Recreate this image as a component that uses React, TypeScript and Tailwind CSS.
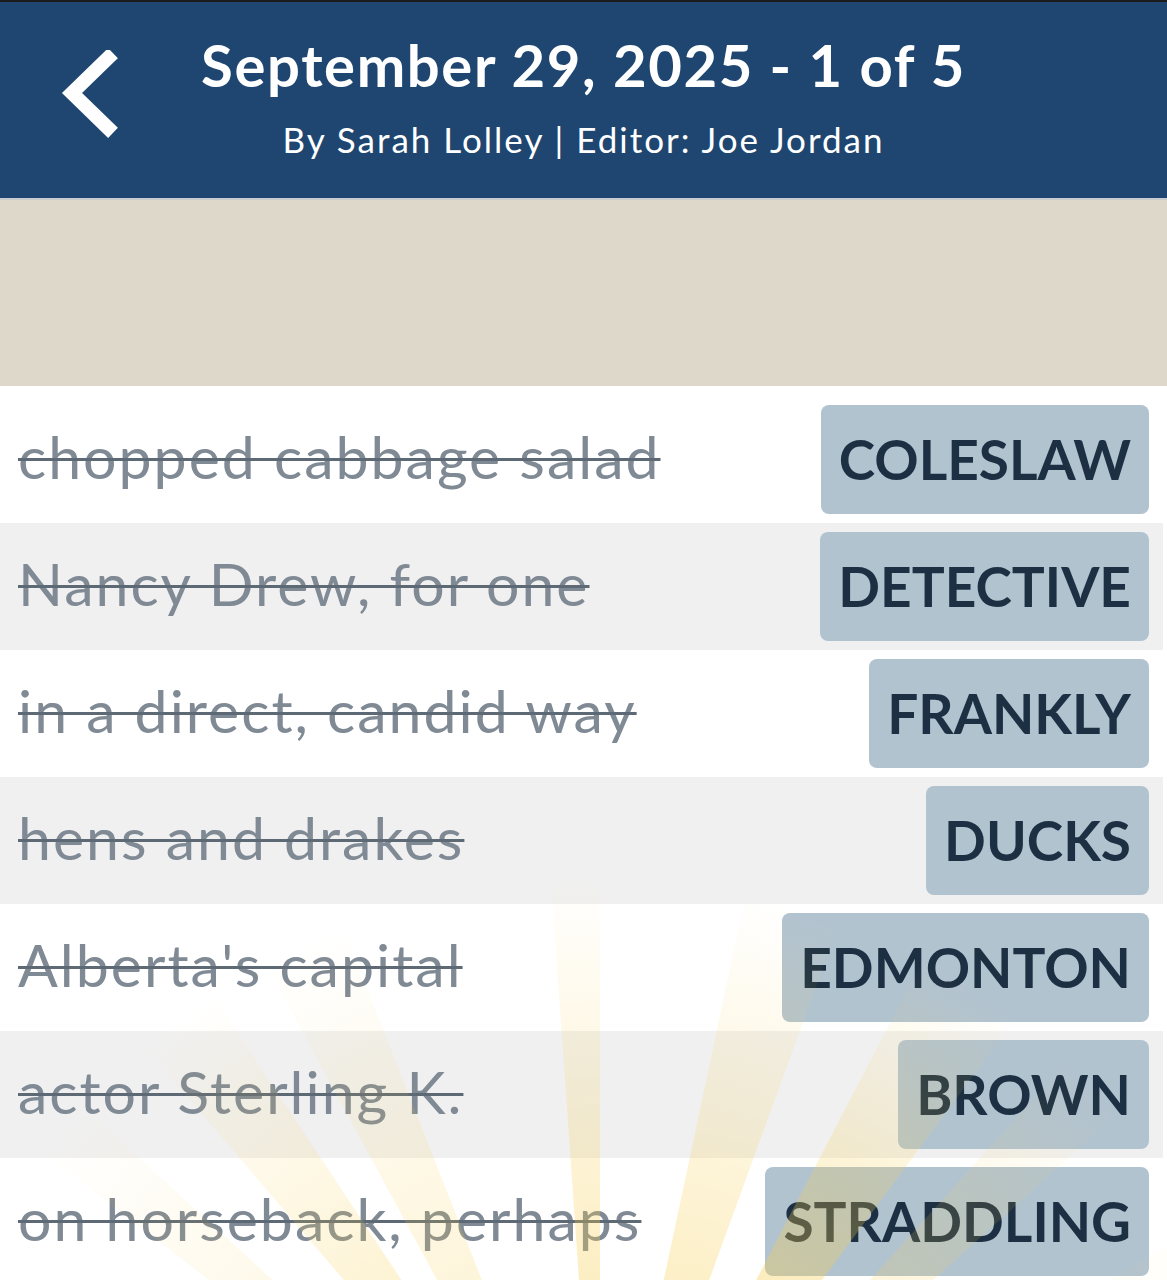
import React from "react";

const clues = [
  { clue: "chopped cabbage salad", answer: "COLESLAW" },
  { clue: "Nancy Drew, for one", answer: "DETECTIVE" },
  { clue: "in a direct, candid way", answer: "FRANKLY" },
  { clue: "hens and drakes", answer: "DUCKS" },
  { clue: "Alberta's capital", answer: "EDMONTON" },
  { clue: "actor Sterling K.", answer: "BROWN" },
  { clue: "on horseback, perhaps", answer: "STRADDLING" },
];

// sun rays: angle from vertical (deg), width (deg), strength
const rays = [
  { a: -50, w: 5, o: 0.45 },
  { a: -37, w: 7, o: 0.7 },
  { a: -25, w: 7, o: 0.55 },
  { a: -2, w: 4, o: 0.85 },
  { a: 16, w: 8, o: 0.8 },
  { a: 32, w: 9, o: 1 },
  { a: 45, w: 6, o: 0.65 },
  { a: 62, w: 5, o: 0.4 },
];

const CX = 600;
const CY = 1580;

function rayPoints(a: number, w: number) {
  const R = 1000;
  const r1 = ((a - w / 2) * Math.PI) / 180;
  const r2 = ((a + w / 2) * Math.PI) / 180;
  return `${CX},${CY} ${CX + R * Math.sin(r1)},${CY - R * Math.cos(r1)} ${CX + R * Math.sin(r2)},${CY - R * Math.cos(r2)}`;
}

function SunRays() {
  return (
    <svg className="pointer-events-none absolute inset-0" width="1167" height="1280" viewBox="0 0 1167 1280">
      <defs>
        <radialGradient id="rayFade" gradientUnits="userSpaceOnUse" cx={CX} cy={CY} r="700">
          <stop offset="0%" stopColor="#f7cd4a" stopOpacity="0.5" />
          <stop offset="45%" stopColor="#f7cd4a" stopOpacity="0.38" />
          <stop offset="75%" stopColor="#f7cd4a" stopOpacity="0.18" />
          <stop offset="100%" stopColor="#f7cd4a" stopOpacity="0" />
        </radialGradient>
      </defs>
      {rays.map((r, i) => (
        <polygon key={i} points={rayPoints(r.a, r.w)} fill="url(#rayFade)" opacity={r.o} />
      ))}
    </svg>
  );
}

export default function App() {
  return (
    <div className="relative h-[1280px] w-[1167px] overflow-hidden bg-white font-['Lato',sans-serif]">
      <div className="h-[2px] bg-[#1b1b1b]" />

      {/* Header */}
      <header className="grid h-[196px] grid-cols-[160px_1fr_160px] bg-[#1e4671]">
        <div className="flex items-start pl-[58px] pt-[48px]">
          <svg width="62" height="90" viewBox="0 0 62 90">
            <path d="M50 8 L14 43 L50 78" fill="none" stroke="#ffffff" strokeWidth="14" strokeLinecap="square" strokeLinejoin="miter" />
          </svg>
        </div>
        <div className="flex flex-col items-center pt-[28px] text-white">
          <h1 className="whitespace-nowrap text-[58px] font-bold leading-[70px] tracking-[1.6px]">September 29, 2025 - 1 of 5</h1>
          <p className="mt-[17px] whitespace-nowrap text-[35px] leading-[44px] tracking-[2px]">By Sarah Lolley | Editor: Joe Jordan</p>
        </div>
        <div />
      </header>

      <div className="h-[2px] bg-[#c9ccd0]" />
      <div className="h-[186px] bg-[#ded8cb]" />

      {/* Clue list */}
      <div className="pt-[10px]">
        {clues.map((c, i) => (
          <div
            key={c.answer}
            className={`mr-[4px] flex h-[127px] items-center justify-between pl-[18px] pr-[14px] ${i % 2 === 1 ? "bg-[#f0f0f0]" : "bg-white"}`}
          >
            <span className="-mt-[4px] text-[59px] tracking-[2px] text-[#808a95] line-through decoration-[#5d6975] decoration-[3px]">{c.clue}</span>
            <span className="flex h-[109px] items-center rounded-[8px] bg-[#b2c3d0] px-[18px] text-[55px] font-bold text-[#1d3043]">
              {c.answer}
            </span>
          </div>
        ))}
      </div>

      <SunRays />
    </div>
  );
}
